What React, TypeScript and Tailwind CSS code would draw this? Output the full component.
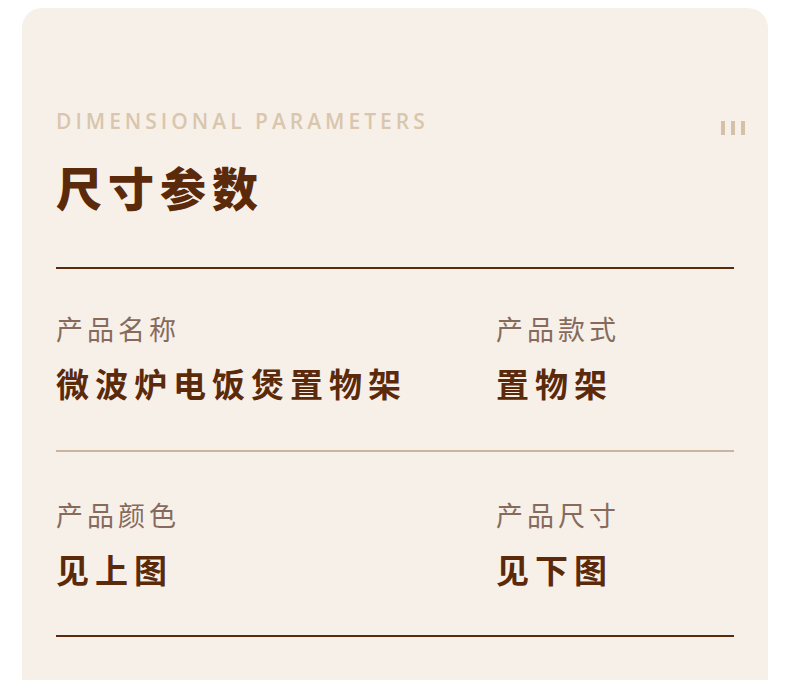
const CJK = "font-['Noto_Sans_CJK_SC',sans-serif]";

const rows = [
  [
    { label: "产品名称", value: "微波炉电饭煲置物架" },
    { label: "产品款式", value: "置物架" },
  ],
  [
    { label: "产品颜色", value: "见上图" },
    { label: "产品尺寸", value: "见下图" },
  ],
];

function Field({ label, value }: { label: string; value: string }) {
  return (
    <div className="flex flex-col">
      <div
        className={`${CJK} text-[27px] leading-[36px] tracking-[4px] text-[#866b5d]`}
      >
        {label}
      </div>
      <div
        className={`${CJK} mt-[16px] text-[33px] leading-[40px] font-bold tracking-[6px] text-[#5b2a0a]`}
      >
        {value}
      </div>
    </div>
  );
}

export default function App() {
  return (
    <div className="flex min-h-[680px] flex-col bg-white pt-[8px] px-[22px]">
      <div className="flex-1 rounded-t-[20px] bg-[#f7f0e9] px-[34px] pt-[99px] pb-[40px]">
        <div className="flex items-center justify-between">
          <div className="font-['Open_Sans',sans-serif] text-[21px] leading-[28px] font-semibold tracking-[4px] text-[#d9c6ad]">
            DIMENSIONAL PARAMETERS
          </div>
          <div className="mt-[14px] mr-[-11px] flex gap-[6px]">
            <span className="h-[14px] w-[4px] bg-[#d4c1a8]" />
            <span className="h-[14px] w-[4px] bg-[#d4c1a8]" />
            <span className="h-[14px] w-[4px] bg-[#d4c1a8]" />
          </div>
        </div>
        <h1
          className={`${CJK} mt-[21px] text-[46px] leading-[60px] font-black tracking-[6px] text-[#5b2a0a]`}
        >
          尺寸参数
        </h1>
        <div className="mt-[51px] h-[2px] bg-[#5b2a0a]" />
        {rows.map((row, i) => (
          <div key={i}>
            <div
              className={
                i === 0
                  ? "grid grid-cols-[440px_1fr] pt-[42px] pb-[47px]"
                  : "grid grid-cols-[440px_1fr] pt-[45px] pb-[46px]"
              }
            >
              {row.map((f) => (
                <Field key={f.label} label={f.label} value={f.value} />
              ))}
            </div>
            <div
              className={
                i === rows.length - 1
                  ? "h-[2px] bg-[#5b2a0a]"
                  : "h-[2px] bg-[#c9b3a1]"
              }
            />
          </div>
        ))}
      </div>
    </div>
  );
}
